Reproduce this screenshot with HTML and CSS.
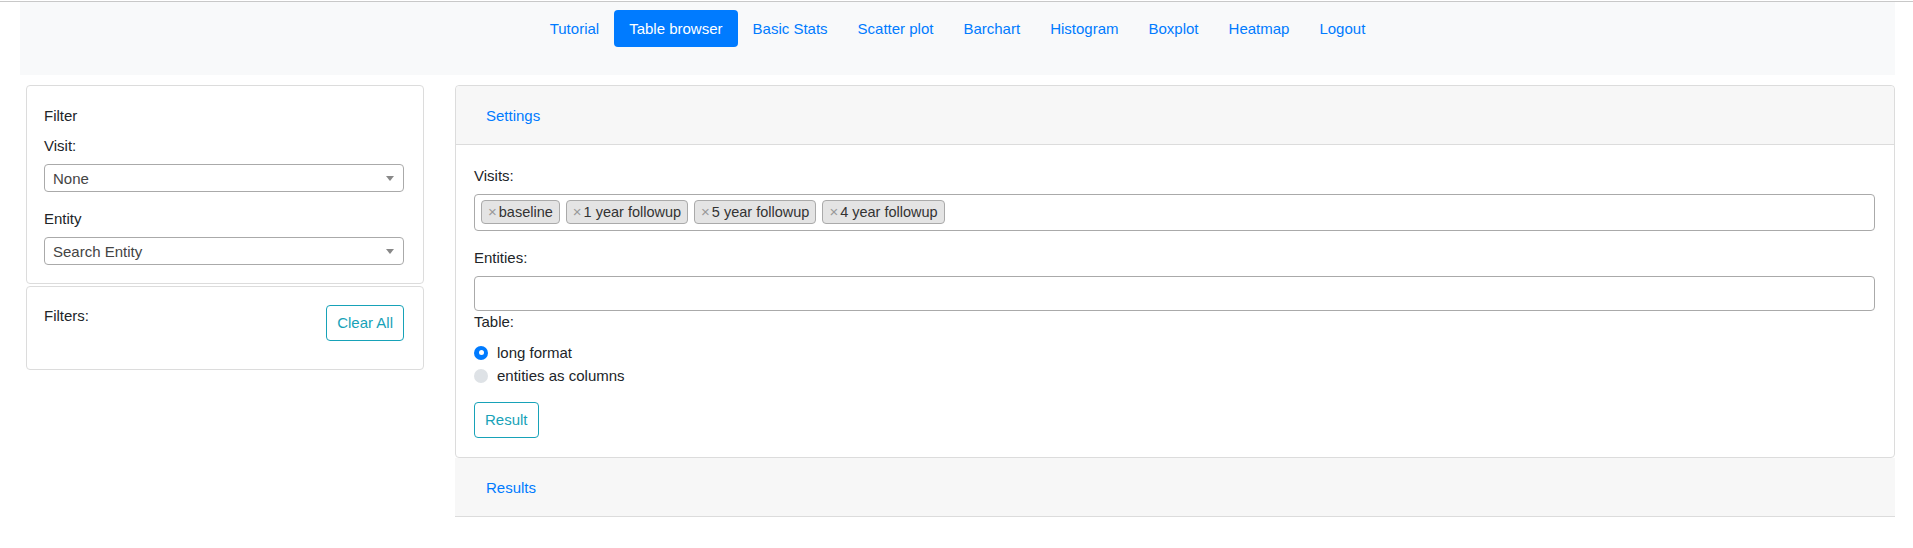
FILE: index.html
```html
<!DOCTYPE html>
<html>
<head>
<meta charset="utf-8">
<link rel="stylesheet" href="styles.css">
</head>
<body>
<div class="topline"></div>
<nav class="navbar">
  <ul class="nav">
    <li><a class="nav-link">Tutorial</a></li>
    <li><a class="nav-link active">Table browser</a></li>
    <li><a class="nav-link">Basic Stats</a></li>
    <li><a class="nav-link">Scatter plot</a></li>
    <li><a class="nav-link">Barchart</a></li>
    <li><a class="nav-link">Histogram</a></li>
    <li><a class="nav-link">Boxplot</a></li>
    <li><a class="nav-link">Heatmap</a></li>
    <li><a class="nav-link">Logout</a></li>
  </ul>
</nav>
<div class="main">
  <aside class="sidebar">
    <div class="card filter-card">
      <div class="label label-filter">Filter</div>
      <div class="label">Visit:</div>
      <div class="select"><span class="select-text">None</span><span class="arrow"></span></div>
      <div class="label label-group">Entity</div>
      <div class="select"><span class="select-text">Search Entity</span><span class="arrow"></span></div>
    </div>
    <div class="card filters-card">
      <div class="label">Filters:</div>
      <button class="btn btn-info">Clear All</button>
    </div>
  </aside>
  <section class="content">
    <div class="card settings-card">
      <div class="card-header"><a class="header-link">Settings</a></div>
      <div class="card-body">
        <div class="label">Visits:</div>
        <div class="tagbox">
          <span class="tag"><span class="tag-x">×</span>baseline</span>
          <span class="tag"><span class="tag-x">×</span>1 year followup</span>
          <span class="tag"><span class="tag-x">×</span>5 year followup</span>
          <span class="tag"><span class="tag-x">×</span>4 year followup</span>
        </div>
        <div class="label label-group">Entities:</div>
        <div class="input"></div>
        <div class="label label-table">Table:</div>
        <div class="radios">
          <div class="radio-row"><span class="radio checked"></span>long format</div>
          <div class="radio-row"><span class="radio"></span>entities as columns</div>
        </div>
        <button class="btn btn-info btn-result">Result</button>
      </div>
    </div>
    <div class="results-header"><a class="header-link">Results</a></div>
  </section>
</div>
</body>
</html>
```
FILE: styles.css
```css
* { box-sizing: border-box; }
html, body { margin: 0; padding: 0; background: #fff; }
body {
  font-family: "Liberation Sans", Arial, sans-serif;
  font-size: 15px;
  color: #212529;
}
.topline { height: 1px; margin-top: 1px; background: #c8c8c8; }
.navbar {
  margin-left: 20px;
  width: 1875px;
  height: 73px;
  background: #f8f9fa;
  padding-top: 8px;
}
.nav {
  list-style: none;
  margin: 0;
  padding: 0;
  display: flex;
  justify-content: center;
}
.nav-link {
  display: block;
  padding: 7px 15px;
  line-height: 23px;
  color: #007bff;
  border-radius: 4px;
}
.nav-link.active { background: #007bff; color: #fff; }

.main {
  display: flex;
  padding: 10px 0 0 26px;
  gap: 31px;
}
.sidebar { width: 398px; flex: none; }
.content { width: 1440px; flex: none; }

.card {
  border: 1px solid #dcdcdc;
  border-radius: 4px;
  background: #fff;
}
.label { line-height: 22px; }
.filter-card { padding: 19px 19px 18px 17px; }
.filter-card .label { margin-bottom: 7px; }
.filter-card .label-filter { margin-bottom: 8px; }
.label-group { margin-top: 16px; }
.select {
  height: 28px;
  border: 1px solid #aaa;
  border-radius: 4px;
  display: flex;
  align-items: center;
  justify-content: space-between;
  padding: 0 9px 0 8px;
  color: #444;
}
.arrow {
  width: 0; height: 0;
  border-style: solid;
  border-width: 5px 4px 0 4px;
  border-color: #888 transparent transparent transparent;
}
.filters-card {
  margin-top: 2px;
  padding: 18px 19px 28px 17px;
  display: flex;
  justify-content: space-between;
  align-items: flex-start;
}
.btn {
  font-family: inherit;
  font-size: 15px;
  height: 36px;
  padding: 0 10px;
  background: #fff;
  border-radius: 4px;
  line-height: 22px;
}
.btn-info { color: #17a2b8; border: 1px solid #17a2b8; }

.card-header {
  height: 59px;
  background: #f7f7f7;
  border-bottom: 1px solid #dcdcdc;
  display: flex;
  align-items: center;
  padding-left: 30px;
  border-radius: 4px 4px 0 0;
}
.header-link { color: #007bff; }
.card-body { padding: 20px 19px 19px 18px; }
.card-body .label { margin-bottom: 7px; }
.card-body .label-table { margin-bottom: 0; }
.tagbox {
  height: 37px;
  border: 1px solid #aaa;
  border-radius: 4px;
  padding: 5px 6px;
  display: flex;
  gap: 6px;
  align-items: flex-start;
}
.tag {
  height: 24px;
  font-size: 14.5px;
  line-height: 22px;
  background: #e4e4e4;
  border: 1px solid #aaa;
  border-radius: 4px;
  padding: 0 6px 0 6px;
  color: #333;
  display: inline-flex;
  align-items: center;
}
.tag-x { color: #999; margin-right: 2px; font-size: 15px; }
.input {
  height: 35px;
  border: 1px solid #aaa;
  border-radius: 4px;
}
.radios { margin-top: 8px; }
.radio-row {
  height: 23px;
  display: flex;
  align-items: center;
  gap: 9px;
}
.radio {
  width: 14px; height: 14px;
  border-radius: 50%;
  background: #dee2e6;
  display: inline-flex;
  align-items: center;
  justify-content: center;
}
.radio.checked { background: #007bff; }
.radio.checked::after {
  content: "";
  width: 5px; height: 5px;
  border-radius: 50%;
  background: #fff;
}
.btn-result { margin-top: 15px; }
.results-header {
  height: 59px;
  background: #f7f7f7;
  border-bottom: 1px solid #dcdcdc;
  display: flex;
  align-items: center;
  padding-left: 31px;
}
```
